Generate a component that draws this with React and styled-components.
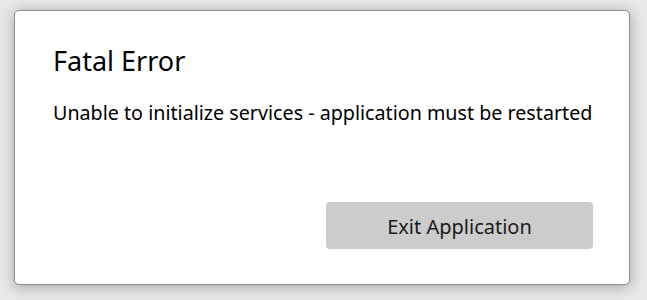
import React from "react";
import styled, { createGlobalStyle } from "styled-components";

const Global = createGlobalStyle`
  html, body { margin: 0; padding: 0; }
  body {
    background: #e8e8e8;
    font-family: "Noto Sans", "Open Sans", sans-serif;
    color: #000;
    width: 647px;
    height: 300px;
    overflow: hidden;
  }
`;

const Stage = styled.div`
  box-sizing: border-box;
  width: 647px;
  height: 300px;
  padding: 10px 17px 15px 14px;
  display: flex;
`;

const Dialog = styled.div`
  box-sizing: border-box;
  flex: 1;
  display: flex;
  flex-direction: column;
  background: #ffffff;
  border: 1px solid #8e8e8e;
  border-radius: 5px;
  box-shadow: 0 2px 14px rgba(0, 0, 0, 0.3);
  padding: 32px 36px 35px 38px;
`;

const Title = styled.h1`
  margin: 0;
  font-size: 27px;
  font-weight: 400;
  line-height: 36px;
`;

const Message = styled.p`
  margin: 20px 0 0;
  font-size: 19.7px;
  line-height: 28px;
  white-space: nowrap;
`;

const Footer = styled.div`
  margin-top: auto;
  display: flex;
  justify-content: flex-end;
`;

const Button = styled.button`
  width: 267px;
  height: 47px;
  border: none;
  border-radius: 4px;
  background: #cccccc;
  color: #1a1a1a;
  font-family: inherit;
  font-size: 20px;
  padding: 2px 0 0;
  cursor: pointer;
`;

export default function App() {
  return (
    <>
      <Global />
      <Stage>
        <Dialog>
          <Title>Fatal Error</Title>
          <Message>Unable to initialize services - application must be restarted</Message>
          <Footer>
            <Button>Exit Application</Button>
          </Footer>
        </Dialog>
      </Stage>
    </>
  );
}
